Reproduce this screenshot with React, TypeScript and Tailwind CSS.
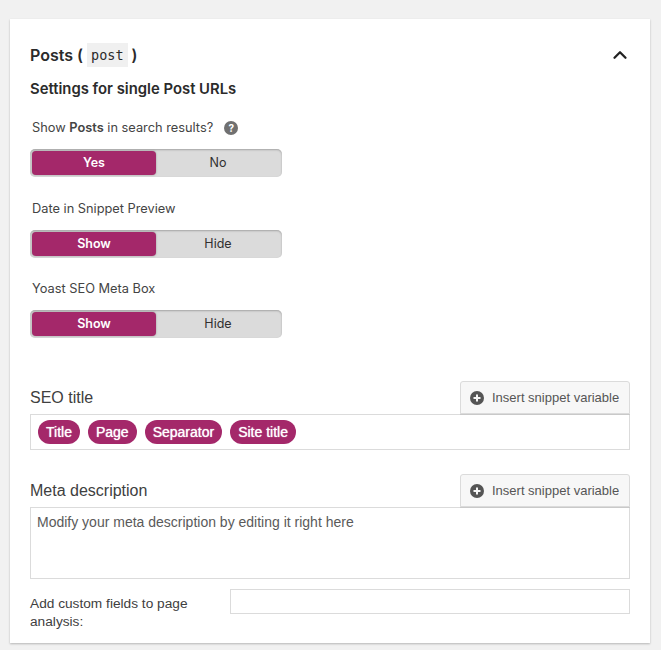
import { ChevronUp } from 'lucide-react';

const SYSTEM_FONT = "font-['Inter','Liberation_Sans',sans-serif]";

interface ToggleProps {
  on: string;
  off: string;
}

function Toggle({ on, off }: ToggleProps) {
  return (
    <div className="flex h-[28px] w-[252px] rounded-[5px] bg-[#dbdbdb] p-[2px] shadow-[inset_0_1px_2px_rgba(0,0,0,0.25)]">
      <div className="flex w-[124px] items-center justify-center rounded-[4px] bg-[#a4286a] text-[12.5px] font-semibold text-white shadow-[0_0_2px_rgba(0,0,0,0.35)]">
        {on}
      </div>
      <div className="flex flex-1 items-center justify-center text-[12.5px] text-[#303030]">{off}</div>
    </div>
  );
}

function SnippetButton() {
  return (
    <button className="flex h-[33px] w-[170px] items-center gap-[8px] rounded-t-[3px] border border-[#dbdbdb] bg-[#f7f7f7] pl-[9px] text-[13px] text-[#555] shadow-[0_1px_0_rgba(0,0,0,0.08)]">
      <svg width="14" height="14" viewBox="0 0 14 14" className="shrink-0">
        <circle cx="7" cy="7" r="7" fill="#555" />
        <path d="M7 3.5v7M3.5 7h7" stroke="#f7f7f7" strokeWidth="2" />
      </svg>
      Insert snippet variable
    </button>
  );
}

function Pill({ label }: { label: string }) {
  return (
    <span className="flex h-[24px] items-center rounded-full bg-[#a4286a] px-[8px] text-[14px] text-white [text-shadow:0_0_1px_#fff]">
      {label}
    </span>
  );
}

export default function App() {
  return (
    <div className="h-[650px] overflow-hidden bg-[#f1f1f1] pl-[10px] pt-[19px] font-['Liberation_Sans',sans-serif]">
      <div className="h-[624px] w-[640px] bg-white px-[20px] pt-[24px] shadow-[0_1px_2px_rgba(0,0,0,0.25)]">
        <div className={`${SYSTEM_FONT} text-[#2b2b2b]`}>
          <div className="flex h-[24px] items-center justify-between">
            <h2 className="flex items-center text-[16px] font-semibold">
              Posts (
              <code className="mx-[4px] bg-[#f0f0f0] px-[4px] py-[2px] font-['DejaVu_Sans_Mono',monospace] text-[13.5px] font-normal">
                post
              </code>
              )
            </h2>
            <ChevronUp size={22} strokeWidth={2.5} className="mr-[-1px] text-[#222]" />
          </div>
          <h3 className="pt-[12px] text-[14.85px] font-semibold leading-[20px]">Settings for single Post URLs</h3>

          <div className="mt-[19px] flex h-[20px] items-center pl-[2px] text-[12.8px] text-[#444]">
            <span>
              Show <b className="font-semibold">Posts</b> in search results?
            </span>
            <span className="ml-[11px] flex h-[14px] w-[14px] items-center justify-center rounded-full bg-[#707070] text-[10px] font-bold text-white">
              ?
            </span>
          </div>
          <div className="mt-[11px]">
            <Toggle on="Yes" off="No" />
          </div>

          <div className="mt-[22px] h-[20px] pl-[2px] text-[12.8px] leading-[20px] text-[#444]">Date in Snippet Preview</div>
          <div className="mt-[11px]">
            <Toggle on="Show" off="Hide" />
          </div>

          <div className="mt-[21px] h-[20px] pl-[2px] text-[12.8px] leading-[20px] text-[#444]">Yoast SEO Meta Box</div>
          <div className="mt-[11px]">
            <Toggle on="Show" off="Hide" />
          </div>
        </div>

        <div className="mt-[43px] flex items-end justify-between">
          <span className="pb-[6px] text-[16px] leading-[20px] text-[#404040]">SEO title</span>
          <SnippetButton />
        </div>
        <div className="flex h-[36px] items-center gap-[8px] border border-[#dbdbdb] pl-[7px]">
          <Pill label="Title" />
          <Pill label="Page" />
          <Pill label="Separator" />
          <Pill label="Site title" />
        </div>

        <div className="mt-[24px] flex items-end justify-between">
          <span className="pb-[6px] text-[16px] leading-[20px] text-[#404040]">Meta description</span>
          <SnippetButton />
        </div>
        <div className="h-[72px] border border-[#dbdbdb] px-[6px] py-[5px] text-[14px] leading-[18px] text-[#5a5a5a]">
          Modify your meta description by editing it right here
        </div>

        <div className="mt-[10px] flex">
          <label className="w-[200px] pr-[20px] pt-[6px] text-[13.7px] leading-[18px] text-[#404040]">
            Add custom fields to page analysis:
          </label>
          <div className="h-[25px] flex-1 border border-[#dbdbdb]" />
        </div>
      </div>
    </div>
  );
}
